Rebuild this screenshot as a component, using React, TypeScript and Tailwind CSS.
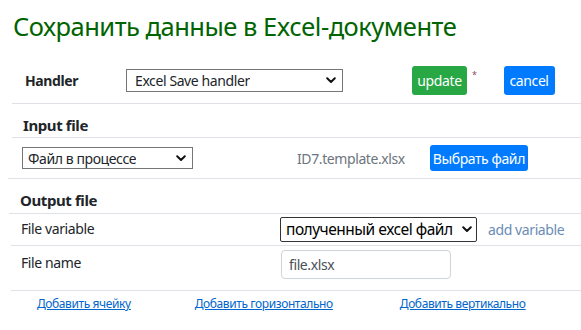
import React from "react";

function Chevron() {
  return (
    <svg width="10" height="7" viewBox="0 0 10 7" className="shrink-0">
      <path d="M1.2 1.3 L5 5 L8.8 1.3" fill="none" stroke="#111" strokeWidth="2" strokeLinecap="round" strokeLinejoin="round" />
    </svg>
  );
}

function FakeSelect({ value, className }: { value: string; className: string }) {
  return (
    <div className={`flex items-center justify-between ${className}`}>
      <span className="whitespace-nowrap overflow-hidden">{value}</span>
      <Chevron />
    </div>
  );
}

export default function App() {
  return (
    <div className="w-[581px] h-[330px] bg-white text-[14px] tracking-[-0.4px] text-[#212529] overflow-hidden" style={{ fontFamily: '"Noto Sans", "Open Sans", sans-serif' }}>
      <h1 className="pl-[13px] pt-[8px] text-[25.5px] tracking-[-0.5px] leading-[36px] text-[#006400]">Сохранить данные в Excel-документе</h1>

      {/* handler row */}
      <div className="ml-[12px] h-[60px] flex items-center border-b border-[#dee2e6] pt-[14px]">
        <div className="w-[114px] pl-[13px] font-bold">Handler</div>
        <FakeSelect value="Excel Save handler" className="w-[217px] h-[23px] border border-[#767676] pl-[8px] pr-[6px]" />
        <div className="ml-[69px] flex items-start">
          <button className="w-[55px] h-[29px] bg-[#28a745] text-white rounded-[3px]">update</button>
          <span className="ml-[5px] mt-[2px] text-[9px] text-[#8b4a6b]">*</span>
        </div>
        <button className="ml-[27px] w-[51px] h-[29px] bg-[#007bff] text-white rounded-[3px]">cancel</button>
      </div>

      {/* input file */}
      <div className="ml-[12px] h-[34px] flex items-end pb-[1px] border-b border-[#dee2e6]">
        <div className="pl-[11px] font-bold text-[15px]">Input file</div>
      </div>
      <div className="ml-[8px] h-[41px] flex items-center border-b border-[#dee2e6]">
        <FakeSelect value="Файл в процессе" className="ml-[14px] w-[171px] h-[22px] border border-[#767676] pl-[5px] pr-[6px]" />
        <span className="ml-[104px] text-[#6c757d]">ID7.template.xlsx</span>
        <button className="ml-[25px] w-[98px] h-[26px] bg-[#007bff] text-white rounded-[3px]">Выбрать файл</button>
      </div>

      {/* output file */}
      <div className="ml-[9px] h-[35px] flex items-end pb-[2px] border-b border-[#dee2e6]">
        <div className="pl-[11px] font-bold text-[15px]">Output file</div>
      </div>
      <div className="ml-[11px] h-[32px] flex items-center border-b border-[#dee2e6]">
        <div className="w-[269px] pl-[10px] -mt-[2px]">File variable</div>
        <FakeSelect value="полученный excel файл" className="w-[197px] h-[25px] border border-[#333] rounded-[2px] pl-[5px] pr-[4px] text-[15.5px] tracking-[-0.5px] text-black" />
        <span className="ml-[11px] text-[#6b8cb5]">add variable</span>
      </div>
      <div className="ml-[11px] h-[45px] flex items-start pt-[4px] border-b border-[#dee2e6]">
        <div className="w-[270px] pl-[10px] pt-[2px]">File name</div>
        <div className="w-[170px] h-[29px] border border-[#ced4da] rounded-[4px] pl-[7px] flex items-center text-[#495057]">file.xlsx</div>
      </div>

      {/* links */}
      <div className="flex items-center h-[26px] text-[12px] tracking-[-0.4px] text-[#0066cc] underline">
        <a className="ml-[37px]">Добавить ячейку</a>
        <a className="ml-[64px]">Добавить горизонтально</a>
        <a className="ml-[67px]">Добавить вертикально</a>
      </div>
    </div>
  );
}
